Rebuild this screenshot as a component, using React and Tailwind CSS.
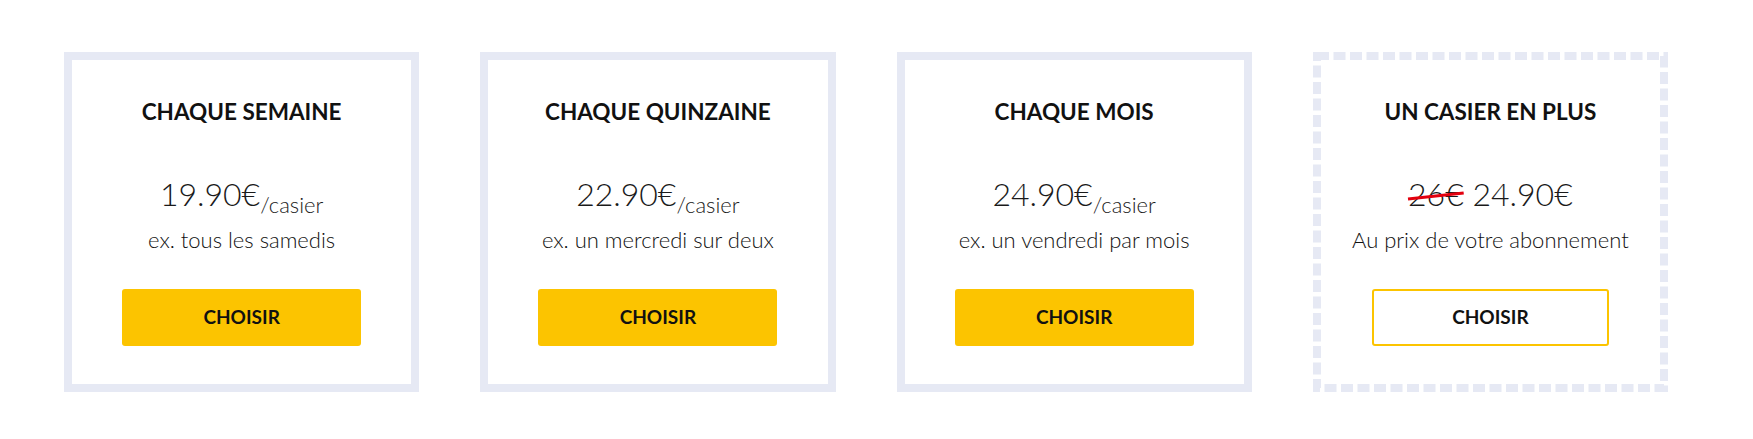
import React from 'react';

const plans = [
  { title: 'CHAQUE SEMAINE', price: '19.90€', note: 'ex. tous les samedis' },
  { title: 'CHAQUE QUINZAINE', price: '22.90€', note: 'ex. un mercredi sur deux' },
  { title: 'CHAQUE MOIS', price: '24.90€', note: 'ex. un vendredi par mois' },
];

const Card = ({ dashed, children }) => (
  <div
    className={`relative flex flex-col items-center h-[340px] border-[8px] bg-white pt-[37px] ${
      dashed ? 'border-transparent' : 'border-[#e6e9f4]'
    }`}
  >
    {dashed && (
      <svg className="absolute -inset-[8px] w-[calc(100%+16px)] h-[calc(100%+16px)] pointer-events-none">
        <rect
          x="4"
          y="4"
          width="347"
          height="332"
          fill="none"
          stroke="#e6e9f4"
          strokeWidth="8"
          strokeDasharray="12 4.5"
        />
      </svg>
    )}
    {children}
  </div>
);

const App = () => {
  return (
    <div
      className="w-[1753px] h-[439px] bg-white pt-[52px] pl-[64px] text-[#111]"
      style={{ fontFamily: 'Lato, "Open Sans", sans-serif' }}
    >
      <div className="grid grid-cols-4 gap-[61px] w-[1604px]">
        {plans.map((plan) => (
          <Card key={plan.title}>
            <h2 className="h-[30px] text-[22.5px] font-bold leading-[30px]">{plan.title}</h2>
            <div className="mt-[49px] h-[36px] text-[32px] font-light leading-[36px] whitespace-nowrap text-[#1a1a1a]">
              {plan.price}
              <span className="text-[22px] align-[-7px]">/casier</span>
            </div>
            <p className="mt-[15px] h-[26px] text-[22px] font-light leading-[26px] text-[#111]">{plan.note}</p>
            <button className="mt-[36px] w-[239px] h-[57px] rounded-[3px] bg-[#fcc400] text-[19px] font-bold text-[#111]">
              CHOISIR
            </button>
          </Card>
        ))}
        <Card dashed>
          <h2 className="h-[30px] text-[22.5px] font-bold leading-[30px]">UN CASIER EN PLUS</h2>
          <div className="mt-[49px] h-[36px] text-[32px] font-light leading-[36px] whitespace-nowrap text-[#1a1a1a]">
            <span className="relative inline-block">
              26€
              <svg
                className="absolute left-0 top-0 w-full h-full overflow-visible"
                viewBox="0 0 56 36"
                preserveAspectRatio="none"
              >
                <line x1="0" y1="23" x2="56" y2="17" stroke="#e3000f" strokeWidth="3" />
              </svg>
            </span>{' '}
            24.90€
          </div>
          <p className="mt-[15px] h-[26px] text-[22px] font-light leading-[26px] text-[#111]">
            Au prix de votre abonnement
          </p>
          <button className="mt-[36px] w-[237px] h-[57px] rounded-[3px] border-2 border-[#fcc400] bg-white text-[19px] font-bold text-[#111]">
            CHOISIR
          </button>
        </Card>
      </div>
    </div>
  );
};

export default App;
